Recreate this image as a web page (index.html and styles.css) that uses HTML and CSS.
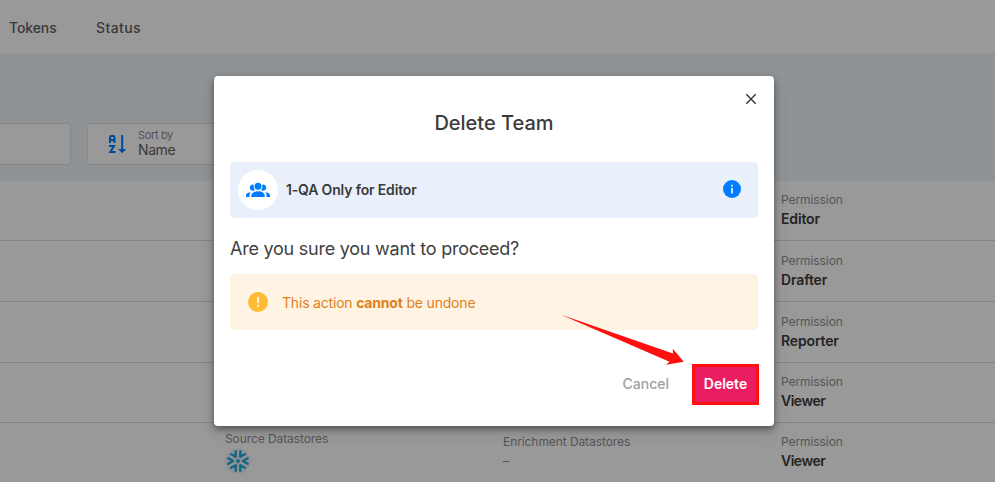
FILE: index.html
```html
<!DOCTYPE html>
<html lang="en">
<head>
<meta charset="utf-8">
<title>Delete Team</title>
<link rel="stylesheet" href="styles.css">
</head>
<body>
<div class="page">
  <nav class="nav"><span class="tokens">Tokens</span><span class="status">Status</span></nav>
  <section class="filters">
    <div class="field search"></div>
    <div class="field sort">
      <svg class="sort-icon" width="20" height="20" viewBox="0 0 20 20" fill="none" stroke="#007dff" stroke-width="2"><path d="M2 9V3.4Q2 2 3.4 2H5.1Q6.5 2 6.5 3.4V9M2 6H6.5M1 12H6L2.3 18H7.5"/><path d="M14.2 1V16"/><path d="M10.2 15h8l-4 4.2z" fill="#007dff" stroke="none"/></svg>
      <div><div class="sort-label">Sort by</div><div class="sort-value">Name</div></div>
    </div>
  </section>
  <main class="rows">
    <div class="row"><div class="cell perm"><span class="label">Permission</span><b class="editor">Editor</b></div></div>
    <div class="row tall"><div class="cell perm"><span class="label">Permission</span><b>Drafter</b></div></div>
    <div class="row tall"><div class="cell perm"><span class="label">Permission</span><b>Reporter</b></div></div>
    <div class="row"><div class="cell perm"><span class="label">Permission</span><b class="viewer">Viewer</b></div></div>
    <div class="row last">
      <div class="cell source"><span class="label">Source Datastores</span>
        <svg class="store" width="26" height="26" viewBox="0 0 26 26"><circle cx="13" cy="13" r="13" fill="#eef3f7"/><g fill="none" stroke="#20a8dc" stroke-width="2.4" stroke-linecap="round" stroke-linejoin="round"><path d="M10.7 3.2V8.8L6.2 6.2M15.3 3.2V8.8L19.8 6.2M10.7 22.8V17.2L6.2 19.8M15.3 22.8V17.2L19.8 19.8M3.3 10.2L8 13L3.3 15.8M22.7 10.2L18 13L22.7 15.8"/><path d="M13 11.4L14.6 13L13 14.6L11.4 13Z" stroke-width="1.3"/></g></svg>
      </div>
      <div class="cell enrich"><span class="label">Enrichment Datastores</span><span class="dash">–</span></div>
      <div class="cell perm"><span class="label">Permission</span><b class="viewer">Viewer</b></div>
    </div>
  </main>
</div>
<div class="scrim">
  <div class="dialog" role="dialog">
    <svg class="close" width="12" height="12" viewBox="0 0 12 12" stroke="#333" stroke-width="1.4"><path d="M1.3 1.3L10.7 10.7M10.7 1.3L1.3 10.7"/></svg>
    <h1>Delete Team</h1>
    <div class="team">
      <span class="avatar"><svg width="24" height="16" viewBox="0 0 24 16" fill="#007dff"><circle cx="12" cy="4.2" r="3.5"/><path d="M8 2.9A3 3 0 1 0 8.8 7.9A4.8 4.8 0 0 1 8 2.9ZM16 2.9A3 3 0 1 1 15.2 7.9A4.8 4.8 0 0 0 16 2.9ZM5.3 15V13.5C5.3 10.8 8.7 9.3 12 9.3S18.7 10.8 18.7 13.5V15ZM0 15V13.2C0 11.4 2.1 10.5 4.7 10.2Q3.5 11.4 3.5 13.2V15ZM24 15V13.2C24 11.4 21.9 10.5 19.3 10.2Q20.5 11.4 20.5 13.2V15Z"/></svg></span>
      <span class="team-name">1-QA Only for Editor</span>
      <svg class="info" width="18" height="18" viewBox="0 0 18 18"><circle cx="9" cy="9" r="9" fill="#007dff"/><path d="M9 8V13.5M9 4.7V6.6" stroke="#e9f0fc" stroke-width="1.8"/></svg>
    </div>
    <p class="question">Are you sure you want to proceed?</p>
    <div class="warning">
      <svg width="20" height="20" viewBox="0 0 20 20"><circle cx="10" cy="10" r="10" fill="#ffbb33"/><path d="M10 5V11.2M10 13V15" stroke="#fff4e3" stroke-width="2"/></svg>
      <span class="warning-text">This action <b>cannot</b> be undone</span>
    </div>
    <div class="actions"><span class="cancel">Cancel</span><button class="delete"><span>Delete</span></button></div>
    <svg class="pointer" width="126" height="54" viewBox="0 0 126 54"><path d="M0.5 0.5L113 39.5L112.8 34.8L123.8 47.8L106 50.7L109.5 47.8Z" fill="#ff1010"/></svg>
  </div>
</div>
</body>
</html>
```

FILE: styles.css
```css
* { box-sizing: border-box; }
body { margin: 0; height: 482px; overflow: hidden; font-family: Inter, "Noto Sans", sans-serif; color: #3f3f3f; background: #fff; }
.page { height: 482px; }
.nav { height: 53px; display: flex; align-items: center; padding: 2px 0 0 9px; font-size: 14px; font-weight: 500; color: #606060; }
.tokens { width: 87px; letter-spacing: -.1px; }
.status { letter-spacing: .4px; }
.filters { height: 128px; background: #eef5fa; padding-top: 70px; display: flex; align-items: flex-start; gap: 16px; }
.field { height: 42px; background: #fff; border: 1px solid #dcdfe1; border-radius: 4px; }
.search { width: 71px; border-left: 0; border-radius: 0 4px 4px 0; }
.sort { width: 200px; display: flex; padding: 3px 0 0 20px; }
.sort-icon { margin: 7px 10px 0 0; flex: none; }
.sort-label { font-size: 11px; line-height: 16px; letter-spacing: -.35px; color: #8c8c8c; }
.sort-value { font-size: 14px; line-height: 14px; letter-spacing: -.4px; color: #606060; }
.row { height: 60px; border-bottom: 1px solid #dcdcdc; display: grid; grid-template-columns: 225px 278px 278px 1fr; }
.tall { height: 61px; }
.last { border: 0; }
.cell { display: flex; flex-direction: column; padding-top: 10px; }
.tall .cell { padding-top: 11px; }
.perm { grid-column: 4; }
.source { grid-column: 2; padding-top: 7px; }
.enrich { grid-column: 3; }
.label { font-size: 12px; line-height: 18px; letter-spacing: -.08px; color: #909090; white-space: nowrap; }
.cell b { font-size: 14px; line-height: 20px; font-weight: 600; letter-spacing: -.15px; color: #3c3c3c; }
.cell .viewer { letter-spacing: -.5px; }
.dash { font-size: 12px; line-height: 20px; color: #909090; }
.scrim { position: absolute; inset: 0; background: rgba(0, 0, 0, .4); padding: 76px 0 0 214px; }
.dialog { position: relative; width: 560px; height: 350px; background: #fff; border-radius: 4px; padding: 0 16px; box-shadow: 0 3px 6px rgba(0,0,0,.4), 0 6px 16px rgba(0,0,0,.12); }
.close { position: absolute; right: 17px; top: 17px; }
h1 { margin: 0; padding-top: 33px; height: 86px; text-align: center; font-size: 20px; line-height: 28px; font-weight: 500; color: #3a3a3a; }
.team { height: 56px; background: #e9f0fc; border-radius: 4px; display: flex; align-items: center; padding: 0 17px 0 8px; }
.avatar { width: 40px; height: 40px; border-radius: 50%; background: #fff; display: flex; align-items: center; justify-content: center; margin-right: 8px; }
.team-name { font-size: 14px; font-weight: 600; letter-spacing: -.16px; color: #3a3a3a; margin-top: -2px; }
.info { margin: -2px 0 0 auto; }
.question { margin: 18px 0 13px; font-size: 18px; line-height: 25px; letter-spacing: -.24px; white-space: nowrap; }
.warning { height: 56px; background: #fff4e3; border-radius: 4px; display: flex; align-items: center; padding: 0 18px; gap: 14px; color: #df811b; font-size: 14px; }
.warning-text { letter-spacing: -.19px; white-space: nowrap; }
.warning b { font-weight: 700; }
.actions { margin-top: 34px; display: flex; justify-content: flex-end; align-items: center; gap: 23px; font-size: 14px; font-weight: 500; }
.cancel { color: #a0a0a0; margin-top: -2px; }
.delete { width: 67px; height: 41px; margin-right: -1px; border: 3px solid #ff1010; background: #ea1d63; color: #fff; font: 600 14px Inter, sans-serif; padding: 0 0 2px; }
.pointer { position: absolute; left: 346px; top: 238px; }
```
